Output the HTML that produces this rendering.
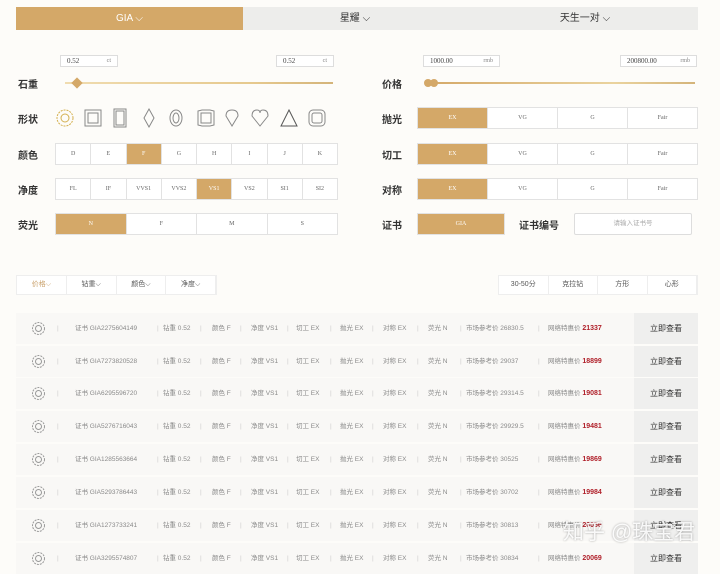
<!DOCTYPE html>
<html><head><meta charset="utf-8"><style>
*{margin:0;padding:0;box-sizing:border-box}
body{width:720px;height:564px;background:#fdfcf9;font-family:"Liberation Serif","Noto Serif CJK SC",serif;position:relative;overflow:hidden;color:#555}
.a{position:absolute}
.tab{top:7px;height:23px;line-height:23px;text-align:center;font-size:10px;font-family:"Liberation Sans","Noto Sans CJK SC",sans-serif}
.lab{font-size:10px;font-weight:bold;color:#333;font-family:"Liberation Sans","Noto Sans CJK SC",sans-serif}
.inp{height:12px;border:1px solid #ddd;background:#fff;font-size:7px;line-height:10px;padding:0 6px;color:#444}
.inp span{float:right;color:#888;font-size:6px}
.grid{display:flex;border:1px solid #e2e2e2;background:#fff}
.grid div{flex:1;border-right:1px solid #e2e2e2;text-align:center;font-size:6px;color:#666;line-height:20px}
.grid div:last-child{border-right:none}
.grid .on{background:#d4a868;color:#fff}
.sort{display:flex;border:1px solid #eee;background:#fff;height:20px}
.sort div{flex:1;border-right:1px solid #eee;text-align:center;font-size:7px;line-height:18px;color:#555;font-family:"Liberation Sans","Noto Sans CJK SC",sans-serif}
.row{position:absolute;left:16px;width:682px;height:31px;background:#f9f8f6;font-size:6.5px;color:#8a8a8a;font-family:"Liberation Sans","Noto Sans CJK SC",sans-serif}
.row span{position:absolute;top:0;line-height:31px;white-space:nowrap}
.row .b{color:#ccc}
.row .p{color:#b0202a;font-weight:bold;font-size:7px}
.row .btn{position:absolute;left:618px;top:0;width:64px;height:31px;background:#efefee;text-align:center;line-height:31px;font-size:8px;color:#333}
.row svg{position:absolute;left:15px;top:8px}
</style></head><body>
<div class="a tab" style="left:16px;width:227px;background:#d4a868;color:#fff">GIA ⌵</div>
<div class="a tab" style="left:243px;width:455px;background:#ededeb"></div>
<div class="a tab" style="left:300px;width:110px;color:#333">星耀 ⌵</div>
<div class="a tab" style="left:530px;width:110px;color:#333">天生一对 ⌵</div>

<div class="a inp" style="left:60px;top:55px;width:58px">0.52<span>ct</span></div>
<div class="a inp" style="left:276px;top:55px;width:58px">0.52<span>ct</span></div>
<div class="a inp" style="left:423px;top:55px;width:77px">1000.00<span>rmb</span></div>
<div class="a inp" style="left:620px;top:55px;width:77px">200800.00<span>rmb</span></div>
<div class="a" style="left:65px;top:82px;width:268px;height:2px;background:linear-gradient(90deg,#f0dcb0,#e6c98e 70%,#d4b47a)"></div>
<div class="a" style="left:73px;top:79px;width:8px;height:8px;background:#d4a868;transform:rotate(45deg)"></div>
<div class="a" style="left:425px;top:82px;width:270px;height:2px;background:linear-gradient(90deg,#d4a868,#ead39e 70%,#d4b47a)"></div>
<div class="a" style="left:424px;top:79px;width:8px;height:8px;border-radius:50%;background:#d4a868"></div>
<div class="a" style="left:430px;top:79px;width:8px;height:8px;border-radius:50%;background:#d4a868"></div>

<div class="a lab" style="left:18px;top:76px">石重</div>
<div class="a lab" style="left:18px;top:111px">形状</div>
<div class="a lab" style="left:18px;top:147px">颜色</div>
<div class="a lab" style="left:18px;top:182px">净度</div>
<div class="a lab" style="left:18px;top:217px">荧光</div>
<div class="a lab" style="left:382px;top:76px">价格</div>
<div class="a lab" style="left:382px;top:111px">抛光</div>
<div class="a lab" style="left:382px;top:147px">切工</div>
<div class="a lab" style="left:382px;top:182px">对称</div>
<div class="a lab" style="left:382px;top:217px">证书</div>
<div class="a lab" style="left:519px;top:217px">证书编号</div>

<svg class="a" style="left:54px;top:107px" width="284" height="22" fill="none" stroke="#888" stroke-width="1">
<circle cx="11" cy="11" r="8" stroke="#d4b050" stroke-dasharray="2 1"/><circle cx="11" cy="11" r="4" stroke="#d4b050"/>
<rect x="31" y="3" width="16" height="16"/><rect x="34" y="6" width="10" height="10"/>
<rect x="60" y="2" width="12" height="18"/><rect x="62" y="4" width="8" height="14"/>
<path d="M95 2 L100 11 L95 20 L90 11Z"/>
<ellipse cx="122" cy="11" rx="6" ry="8"/><ellipse cx="122" cy="11" rx="3" ry="5"/>
<path d="M144 4 L148 3 H156 L160 4 V18 L156 19 H148 L144 18Z"/><rect x="147" y="6" width="10" height="10"/>
<path d="M178 19 L172 9 Q172 3 178 3 Q184 3 184 9Z"/>
<path d="M206 19 L198 9 Q198 3 203 3 Q206 3 206 6 Q206 3 209 3 Q214 3 214 9Z"/>
<path d="M235 3 L243 19 H227Z" stroke="#555"/>
<rect x="255" y="3" width="16" height="16" rx="4"/><rect x="258" y="6" width="10" height="10" rx="2"/>
</svg>

<div class="a grid" style="left:55px;top:143px;width:283px;height:22px"><div>D</div><div>E</div><div class="on">F</div><div>G</div><div>H</div><div>I</div><div>J</div><div>K</div></div>
<div class="a grid" style="left:55px;top:178px;width:283px;height:22px"><div>FL</div><div>IF</div><div>VVS1</div><div>VVS2</div><div class="on">VS1</div><div>VS2</div><div>SI1</div><div>SI2</div></div>
<div class="a grid" style="left:55px;top:213px;width:283px;height:22px"><div class="on">N</div><div>F</div><div>M</div><div>S</div></div>
<div class="a grid" style="left:417px;top:107px;width:281px;height:22px"><div class="on">EX</div><div>VG</div><div>G</div><div>Fair</div></div>
<div class="a grid" style="left:417px;top:143px;width:281px;height:22px"><div class="on">EX</div><div>VG</div><div>G</div><div>Fair</div></div>
<div class="a grid" style="left:417px;top:178px;width:281px;height:22px"><div class="on">EX</div><div>VG</div><div>G</div><div>Fair</div></div>
<div class="a grid" style="left:417px;top:213px;width:88px;height:22px"><div class="on">GIA</div></div>
<div class="a" style="left:574px;top:213px;width:118px;height:22px;border:1px solid #ddd;background:#fff;border-radius:2px;font-size:6.5px;color:#aaa;text-align:center;line-height:20px;font-family:'Liberation Sans','Noto Sans CJK SC',sans-serif">请输入证书号</div>

<div class="a sort" style="left:16px;top:275px;width:201px"><div style="color:#c9a06a;background:#fff">价格⌵</div><div>钻重⌵</div><div>颜色⌵</div><div>净度⌵</div></div>
<div class="a sort" style="left:498px;top:275px;width:200px"><div>30-50分</div><div>克拉钻</div><div>方形</div><div>心形</div></div>

<div class="row" style="top:313px"><svg width="15" height="15" fill="none" stroke="#999"><circle cx="7.5" cy="7.5" r="6" stroke-dasharray="2 1"/><circle cx="7.5" cy="7.5" r="3"/></svg><span class="b" style="left:41px">|</span><span style="left:59px">证书 GIA2275604149</span><span class="b" style="left:141px">|</span><span style="left:147px">钻重 0.52</span><span class="b" style="left:184px">|</span><span style="left:196px">颜色 F</span><span class="b" style="left:224px">|</span><span style="left:235px">净度 VS1</span><span class="b" style="left:271px">|</span><span style="left:280px">切工 EX</span><span class="b" style="left:314px">|</span><span style="left:324px">抛光 EX</span><span class="b" style="left:356px">|</span><span style="left:367px">对称 EX</span><span class="b" style="left:401px">|</span><span style="left:412px">荧光 N</span><span class="b" style="left:444px">|</span><span style="left:450px">市场参考价 26830.5</span><span class="b" style="left:522px">|</span><span style="left:532px">网络特惠价 <b class="p">21337</b></span><div class="btn">立即查看</div></div>
<div class="row" style="top:346px"><svg width="15" height="15" fill="none" stroke="#999"><circle cx="7.5" cy="7.5" r="6" stroke-dasharray="2 1"/><circle cx="7.5" cy="7.5" r="3"/></svg><span class="b" style="left:41px">|</span><span style="left:59px">证书 GIA7273820528</span><span class="b" style="left:141px">|</span><span style="left:147px">钻重 0.52</span><span class="b" style="left:184px">|</span><span style="left:196px">颜色 F</span><span class="b" style="left:224px">|</span><span style="left:235px">净度 VS1</span><span class="b" style="left:271px">|</span><span style="left:280px">切工 EX</span><span class="b" style="left:314px">|</span><span style="left:324px">抛光 EX</span><span class="b" style="left:356px">|</span><span style="left:367px">对称 EX</span><span class="b" style="left:401px">|</span><span style="left:412px">荧光 N</span><span class="b" style="left:444px">|</span><span style="left:450px">市场参考价 29037</span><span class="b" style="left:522px">|</span><span style="left:532px">网络特惠价 <b class="p">18899</b></span><div class="btn">立即查看</div></div>
<div class="row" style="top:378px"><svg width="15" height="15" fill="none" stroke="#999"><circle cx="7.5" cy="7.5" r="6" stroke-dasharray="2 1"/><circle cx="7.5" cy="7.5" r="3"/></svg><span class="b" style="left:41px">|</span><span style="left:59px">证书 GIA6295596720</span><span class="b" style="left:141px">|</span><span style="left:147px">钻重 0.52</span><span class="b" style="left:184px">|</span><span style="left:196px">颜色 F</span><span class="b" style="left:224px">|</span><span style="left:235px">净度 VS1</span><span class="b" style="left:271px">|</span><span style="left:280px">切工 EX</span><span class="b" style="left:314px">|</span><span style="left:324px">抛光 EX</span><span class="b" style="left:356px">|</span><span style="left:367px">对称 EX</span><span class="b" style="left:401px">|</span><span style="left:412px">荧光 N</span><span class="b" style="left:444px">|</span><span style="left:450px">市场参考价 29314.5</span><span class="b" style="left:522px">|</span><span style="left:532px">网络特惠价 <b class="p">19081</b></span><div class="btn">立即查看</div></div>
<div class="row" style="top:411px"><svg width="15" height="15" fill="none" stroke="#999"><circle cx="7.5" cy="7.5" r="6" stroke-dasharray="2 1"/><circle cx="7.5" cy="7.5" r="3"/></svg><span class="b" style="left:41px">|</span><span style="left:59px">证书 GIA5276716043</span><span class="b" style="left:141px">|</span><span style="left:147px">钻重 0.52</span><span class="b" style="left:184px">|</span><span style="left:196px">颜色 F</span><span class="b" style="left:224px">|</span><span style="left:235px">净度 VS1</span><span class="b" style="left:271px">|</span><span style="left:280px">切工 EX</span><span class="b" style="left:314px">|</span><span style="left:324px">抛光 EX</span><span class="b" style="left:356px">|</span><span style="left:367px">对称 EX</span><span class="b" style="left:401px">|</span><span style="left:412px">荧光 N</span><span class="b" style="left:444px">|</span><span style="left:450px">市场参考价 29929.5</span><span class="b" style="left:522px">|</span><span style="left:532px">网络特惠价 <b class="p">19481</b></span><div class="btn">立即查看</div></div>
<div class="row" style="top:444px"><svg width="15" height="15" fill="none" stroke="#999"><circle cx="7.5" cy="7.5" r="6" stroke-dasharray="2 1"/><circle cx="7.5" cy="7.5" r="3"/></svg><span class="b" style="left:41px">|</span><span style="left:59px">证书 GIA1285563664</span><span class="b" style="left:141px">|</span><span style="left:147px">钻重 0.52</span><span class="b" style="left:184px">|</span><span style="left:196px">颜色 F</span><span class="b" style="left:224px">|</span><span style="left:235px">净度 VS1</span><span class="b" style="left:271px">|</span><span style="left:280px">切工 EX</span><span class="b" style="left:314px">|</span><span style="left:324px">抛光 EX</span><span class="b" style="left:356px">|</span><span style="left:367px">对称 EX</span><span class="b" style="left:401px">|</span><span style="left:412px">荧光 N</span><span class="b" style="left:444px">|</span><span style="left:450px">市场参考价 30525</span><span class="b" style="left:522px">|</span><span style="left:532px">网络特惠价 <b class="p">19869</b></span><div class="btn">立即查看</div></div>
<div class="row" style="top:477px"><svg width="15" height="15" fill="none" stroke="#999"><circle cx="7.5" cy="7.5" r="6" stroke-dasharray="2 1"/><circle cx="7.5" cy="7.5" r="3"/></svg><span class="b" style="left:41px">|</span><span style="left:59px">证书 GIA5293786443</span><span class="b" style="left:141px">|</span><span style="left:147px">钻重 0.52</span><span class="b" style="left:184px">|</span><span style="left:196px">颜色 F</span><span class="b" style="left:224px">|</span><span style="left:235px">净度 VS1</span><span class="b" style="left:271px">|</span><span style="left:280px">切工 EX</span><span class="b" style="left:314px">|</span><span style="left:324px">抛光 EX</span><span class="b" style="left:356px">|</span><span style="left:367px">对称 EX</span><span class="b" style="left:401px">|</span><span style="left:412px">荧光 N</span><span class="b" style="left:444px">|</span><span style="left:450px">市场参考价 30702</span><span class="b" style="left:522px">|</span><span style="left:532px">网络特惠价 <b class="p">19984</b></span><div class="btn">立即查看</div></div>
<div class="row" style="top:510px"><svg width="15" height="15" fill="none" stroke="#999"><circle cx="7.5" cy="7.5" r="6" stroke-dasharray="2 1"/><circle cx="7.5" cy="7.5" r="3"/></svg><span class="b" style="left:41px">|</span><span style="left:59px">证书 GIA1273733241</span><span class="b" style="left:141px">|</span><span style="left:147px">钻重 0.52</span><span class="b" style="left:184px">|</span><span style="left:196px">颜色 F</span><span class="b" style="left:224px">|</span><span style="left:235px">净度 VS1</span><span class="b" style="left:271px">|</span><span style="left:280px">切工 EX</span><span class="b" style="left:314px">|</span><span style="left:324px">抛光 EX</span><span class="b" style="left:356px">|</span><span style="left:367px">对称 EX</span><span class="b" style="left:401px">|</span><span style="left:412px">荧光 N</span><span class="b" style="left:444px">|</span><span style="left:450px">市场参考价 30813</span><span class="b" style="left:522px">|</span><span style="left:532px">网络特惠价 <b class="p">20056</b></span><div class="btn">立即查看</div></div>
<div class="row" style="top:543px"><svg width="15" height="15" fill="none" stroke="#999"><circle cx="7.5" cy="7.5" r="6" stroke-dasharray="2 1"/><circle cx="7.5" cy="7.5" r="3"/></svg><span class="b" style="left:41px">|</span><span style="left:59px">证书 GIA3295574807</span><span class="b" style="left:141px">|</span><span style="left:147px">钻重 0.52</span><span class="b" style="left:184px">|</span><span style="left:196px">颜色 F</span><span class="b" style="left:224px">|</span><span style="left:235px">净度 VS1</span><span class="b" style="left:271px">|</span><span style="left:280px">切工 EX</span><span class="b" style="left:314px">|</span><span style="left:324px">抛光 EX</span><span class="b" style="left:356px">|</span><span style="left:367px">对称 EX</span><span class="b" style="left:401px">|</span><span style="left:412px">荧光 N</span><span class="b" style="left:444px">|</span><span style="left:450px">市场参考价 30834</span><span class="b" style="left:522px">|</span><span style="left:532px">网络特惠价 <b class="p">20069</b></span><div class="btn">立即查看</div></div>

<div class="a" style="left:563px;top:516px;font-size:21px;color:rgba(255,255,255,.9);text-shadow:0 0 2px rgba(0,0,0,.35);font-family:'Liberation Sans','Noto Sans CJK SC',sans-serif;white-space:nowrap">知乎 @珠宝君</div>
</body></html>
